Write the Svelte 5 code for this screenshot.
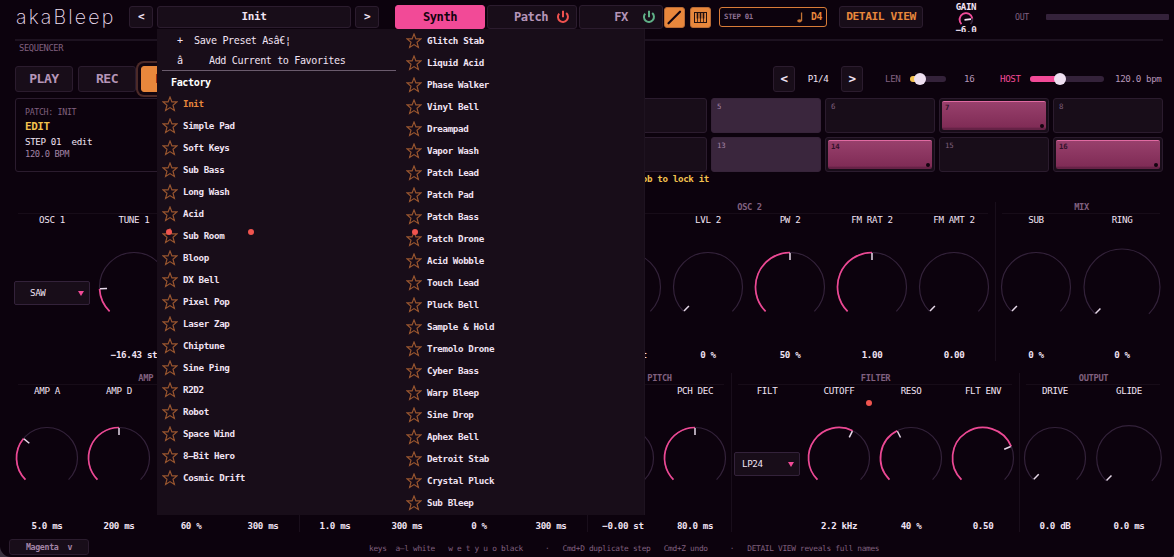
<script>
  const factory = [
    'Init', 'Simple Pad', 'Soft Keys', 'Sub Bass', 'Long Wash', 'Acid', 'Sub Room', 'Bloop', 'DX Bell',
    'Pixel Pop', 'Laser Zap', 'Chiptune', 'Sine Ping', 'R2D2', 'Robot', 'Space Wind', '8–Bit Hero', 'Cosmic Drift'
  ];
  const more = [
    'Glitch Stab', 'Liquid Acid', 'Phase Walker', 'Vinyl Bell', 'Dreampad', 'Vapor Wash', 'Patch Lead',
    'Patch Pad', 'Patch Bass', 'Patch Drone', 'Acid Wobble', 'Touch Lead', 'Pluck Bell', 'Sample & Hold',
    'Tremolo Drone', 'Cyber Bass', 'Warp Bleep', 'Sine Drop', 'Aphex Bell', 'Detroit Stab', 'Crystal Pluck', 'Sub Bleep'
  ];

  const accent = [5, 13];
  const active = [7, 14, 16];
  const steps = Array.from({ length: 16 }, (_, i) => i + 1);

  // w: cell width, r: knob radius, v: position 0..1
  const osc = [
    { title: 'OSC 1', cells: [
      { name: 'OSC 1', select: 'SAW' },
      { name: 'TUNE 1', v: 0.155, text: '−16.43 st', dot: true },
      { name: '', dot: true }, { name: '' }, { name: '', dot: true }, { name: '' }
    ] },
    { title: 'OSC 2', cells: [
      { name: '' },
      { name: '', v: 0.5, text: '−0.00 st' },
      { name: 'LVL 2', v: 0, text: '0 %' },
      { name: 'PW 2', v: 0.5, text: '50 %' },
      { name: 'FM RAT 2', v: 0.5, text: '1.00' },
      { name: 'FM AMT 2', v: 0, text: '0.00' }
    ] },
    { title: 'MIX', cells: [
      { name: 'SUB', v: 0, text: '0 %' },
      { name: 'RING', v: 0, text: '0 %', w: 90, r: 38 }
    ] }
  ];
  const env = [
    { title: 'AMP ENV', cells: [
      { name: 'AMP A', v: 0.314, text: '5.0 ms' },
      { name: 'AMP D', v: 0.5, text: '200 ms' },
      { name: '', text: '60 %' },
      { name: '', text: '300 ms' }
    ] },
    { title: '', cells: [
      { name: '', text: '1.0 ms' },
      { name: '', text: '300 ms' },
      { name: '', text: '0 %' },
      { name: '', text: '300 ms' }
    ] },
    { title: 'PITCH', cells: [
      { name: '', v: 0.5, text: '−0.00 st' },
      { name: 'PCH DEC', v: 0.5, text: '80.0 ms' }
    ] },
    { title: 'FILTER', cells: [
      { name: 'FILT', select: 'LP24' },
      { name: 'CUTOFF', v: 0.598, text: '2.2 kHz', dot: true },
      { name: 'RESO', v: 0.4, text: '40 %' },
      { name: 'FLT ENV', v: 0.75, text: '0.50' }
    ] },
    { title: 'OUTPUT', cells: [
      { name: 'DRIVE', v: 0, text: '0.0 dB' },
      { name: 'GLIDE', v: 0, text: '0.0 ms', w: 76, r: 32.3 }
    ] }
  ];
  const rows = [
    { w: 82, r: 34.5, groups: osc },
    { w: 72, r: 30.5, groups: env }
  ];

  const footer = 'keys  a–l white   w e t y u o black     ·   Cmd+D duplicate step   Cmd+Z undo     ·   DETAIL VIEW reveals full names';

  function point(r, v) {
    const a = ((v * 270 - 135) * Math.PI) / 180;
    return [r * Math.sin(a), -r * Math.cos(a)];
  }

  function arc(r, from, to) {
    const [x1, y1] = point(r, from);
    const [x2, y2] = point(r, to);
    return `M${x1} ${y1}A${r} ${r} 0 ${(to - from) * 270 > 180 ? 1 : 0} 1 ${x2} ${y2}`;
  }
</script>

{#snippet knob(r, v)}
  {@const p = point(r - 0.5, v)}
  {@const q = point(r - 7.5, v)}
  <svg class="knob" width="84" height="84" viewBox="-42 -42 84 84">
    <path class="track" d={arc(r, 0, 1)} />
    {#if v > 0}<path class="fill" d={arc(r, 0, v)} />{/if}
    <line x1={p[0]} y1={p[1]} x2={q[0]} y2={q[1]} />
  </svg>
{/snippet}

{#snippet power(color)}
  <svg class="power" width="14" height="14" viewBox="0 0 14 14" stroke={color}>
    <path d="M3.2 3.6A5 5 0 1 0 10.2 3.1M7 0.8V7.2" />
  </svg>
{/snippet}

{#snippet preset(name, on)}
  <li class:on>
    <svg width="16" height="16" viewBox="-8 -8 16 16">
      <path d="M0 -7L1.9 -2.1L7 -2.1L3 1.2L4.4 6.5L0 3.6L-4.4 6.5L-3 1.2L-7 -2.1L-1.9 -2.1Z" />
    </svg>
    {name}
  </li>
{/snippet}

<div class="window">
  <header>
    <h1>akaBleep</h1>
    <button class="nav">&lt;</button>
    <button class="current">Init</button>
    <button class="nav">&gt;</button>
    <nav>
      <button class="tab selected">Synth</button>
      <button class="tab">Patch {@render power('#f0524f')}</button>
      <button class="tab fx">FX {@render power('#5fb087')}</button>
    </nav>
    <button class="tool">
      <svg width="21" height="21" viewBox="0 0 21 21"><path d="M4.5 16.3L16 4.7" stroke="#12040f" stroke-width="2.2" stroke-linecap="round" /></svg>
    </button>
    <button class="tool keys">
      <svg width="21" height="21" viewBox="0 0 21 21" fill="none" stroke="#24100f">
        <rect x="4.5" y="5.5" width="12" height="10" />
        <path d="M7.5 6V15M10.5 6V15M13.5 6V15" stroke-width=".8" />
        <path d="M7.5 6V11.5M10.5 6V11.5M13.5 6V11.5" stroke-width="1.6" />
      </svg>
    </button>
    <div class="step-box">
      <span>STEP 01</span>
      <svg width="7" height="11" viewBox="0 0 7 11"><ellipse cx="2.5" cy="8.8" rx="2.3" ry="1.6" /><path d="M3.9 0.5H5.2V9H3.9Z" /></svg>
      <b>D4</b>
    </div>
    <button class="detail">DETAIL VIEW</button>
    <div class="gain">
      <span>GAIN</span>
      <svg width="18" height="14" viewBox="-9 -7.5 18 14">
        <path d={arc(6.4, 0, 1)} stroke="#3a263d" />
        <path d={arc(6.4, 0, 0.8)} stroke="#f24a97" />
        <path d="M-1.5 .3L5 -.3" stroke="#f4e4f4" />
      </svg>
      <b>−6.0</b>
    </div>
    <span class="out">OUT</span>
    <div class="meter"></div>
  </header>

  <main>
    <div class="title">SEQUENCER</div>
    <div class="transport">
      <button class="big">PLAY</button>
      <button class="big">REC</button>
      <button class="big edit">EDIT</button>
      <button class="page first">&lt;</button>
      <span class="page-no">P1/4</span>
      <button class="page">&gt;</button>
      <span class="len">LEN</span>
      <div class="slider len-slider"><i style:width="10px"></i></div>
      <span class="num">16</span>
      <span class="host">HOST</span>
      <div class="slider host-slider"><i style:width="30px"></i></div>
      <span class="bpm">120.0 bpm</span>
    </div>

    <div class="sequencer">
      <div class="info">
        <span class="patch">PATCH: INIT</span>
        <b>EDIT</b>
        <span class="step">STEP 01  edit</span>
        <span class="tempo">120.0 BPM</span>
      </div>
      <div class="steps">
        {#each steps as n}
          <div class="cell" class:accent={accent.includes(n)} class:active={active.includes(n)}>
            {#if active.includes(n)}
              <div class="note"><span>{n}</span><i></i></div>
            {:else}
              <span>{n}</span>
            {/if}
          </div>
        {/each}
      </div>
    </div>
    <div class="hint">turn knob to lock it</div>

    {#each rows as row}
      <section>
        {#each row.groups as group}
          <div class="group">
            <h2>{group.title}</h2>
            <div class="params">
              {#each group.cells as c}
                <div class="param" style:width="{c.w ?? row.w}px">
                  <span class="name">{c.name}</span>
                  <div class="control">
                    {#if c.select}
                      <div class="select" class:narrow={row.w < 80}>{c.select}<i></i></div>
                    {:else if c.v !== undefined}
                      {@render knob(c.r ?? row.r, c.v)}
                    {/if}
                    {#if c.dot}<i class="dot" class:near={row.w < 80}></i>{/if}
                  </div>
                  <b>{c.text ?? ''}</b>
                </div>
              {/each}
            </div>
          </div>
        {/each}
      </section>
    {/each}
  </main>

  <footer>
    <button class="theme"><span>Magenta</span><span>v</span></button>
    <span class="help">{footer}</span>
  </footer>

  <div class="menu">
    <div class="column">
      <div class="action"><span>+</span>Save Preset Asâ€¦</div>
      <div class="action fav"><span>â</span>Add Current to Favorites</div>
      <hr />
      <h3>Factory</h3>
      <ul>
        {#each factory as name, i}{@render preset(name, i === 0)}{/each}
      </ul>
    </div>
    <ul class="column second">
      {#each more as name}{@render preset(name, false)}{/each}
    </ul>
  </div>
</div>

<style>
  :global(body) {
    margin: 0;
    background: #3b3340;
  }
  * {
    box-sizing: border-box;
    letter-spacing: -0.039em;
  }
  .window {
    position: relative;
    width: 1174px;
    height: 557px;
    overflow: hidden;
    background: #0c020d;
    color: #f1e3f3;
    border-radius: 0 0 4px 11px;
    font: 9.19px/14px "DejaVu Sans Mono", monospace;
  }
  h1, h2, h3, ul, hr {
    margin: 0;
    padding: 0;
    border: 0;
    list-style: none;
  }
  button {
    display: flex;
    align-items: center;
    justify-content: center;
    flex: none;
    padding: 0;
    border: 1px solid #2b1c2e;
    border-radius: 3px;
    background: #180d19;
    color: #f1e3f3;
    font: bold 11px/14px "DejaVu Sans Mono", monospace;
  }

  /* top bar */
  header {
    display: flex;
    align-items: center;
    height: 41px;
    margin: 0 5px 0 15px;
    padding-bottom: 7px;
    background: linear-gradient(#1d1220, #1d1220) 0 39px / 1148px 2px no-repeat;
  }
  h1 {
    width: 114px;
    padding-left: 1px;
    color: #eedff0;
    font: 200 19.6px/24px Inter, sans-serif;
    letter-spacing: 2.15px;
    white-space: nowrap;
  }
  .nav {
    width: 24px;
    height: 22px;
  }
  .current {
    width: 194px;
    height: 22px;
    margin: 0 4px;
  }
  nav {
    display: flex;
    gap: 2px;
    margin-left: 16px;
  }
  .tab {
    width: 90px;
    height: 24px;
    color: #b595b8;
    font-size: 12.1px;
    gap: 8px;
    padding-left: 20px;
  }
  .tab.selected {
    padding: 0;
    border-color: #f24a97;
    background: #f24a97;
    color: #12040f;
  }
  .tab.fx {
    width: 84px;
    padding-left: 28px;
    gap: 14px;
  }
  .power {
    flex: none;
    fill: none;
    stroke-width: 2;
  }
  .tool {
    width: 21px;
    height: 21px;
    margin-left: 1px;
    border-color: #b86a35;
    background: #e8873c;
  }
  .tool.keys {
    margin-left: 5px;
  }
  .tool svg {
    flex: none;
  }
  .step-box {
    display: flex;
    align-items: center;
    width: 108px;
    height: 20px;
    margin-left: 8px;
    padding: 0 4px;
    border: 1px solid #d87c38;
    border-radius: 3px;
    color: #8f7092;
    font-size: 7.35px;
    font-weight: bold;
  }
  .step-box span {
    flex: 1;
  }
  .step-box svg {
    fill: #c37334;
    margin-right: 7px;
  }
  .step-box b {
    color: #e8873c;
    font-size: 9.8px;
  }
  .detail {
    width: 84px;
    height: 22px;
    margin-left: 12px;
    color: #e8873c;
    font-size: 11.25px;
  }
  .gain {
    display: flex;
    flex-direction: column;
    align-items: center;
    align-self: flex-start;
    width: 40px;
    height: 32px;
    margin-left: 23px;
    overflow: hidden;
    line-height: 12px;
  }
  .gain span {
    margin-top: 1px;
    font-weight: bold;
    font-size: 9.1px;
  }
  .gain svg {
    flex: none;
    margin-top: -1px;
    fill: none;
    stroke-width: 1.8;
  }
  .gain b {
    margin-top: -2px;
  }
  .out {
    width: 31px;
    margin-left: 29px;
    color: #80607f;
    font-size: 8.27px;
  }
  .meter {
    flex: 1;
    height: 6px;
    background: #34223a;
    border-radius: 1px;
  }

  /* sequencer */
  main {
    padding-left: 11px;
  }
  .title {
    padding-left: 8px;
    color: #80607f;
    font-size: 8.73px;
  }
  .transport {
    display: flex;
    align-items: center;
    height: 26px;
    margin: 11px 11px 6px 4px;
  }
  .big {
    width: 58px;
    height: 26px;
    margin-right: 5px;
    color: #b595b8;
    font-size: 13.1px;
  }
  .big.edit {
    border-color: #e8873c;
    background: #e8873c;
    color: #12040f;
    box-shadow: 0 0 0 3px #12050f, 0 0 0 5px #4c2a28;
  }
  .page {
    width: 22px;
    height: 26px;
    font-size: 12.5px;
  }
  .page.first {
    margin-left: 569px;
  }
  .page-no {
    width: 46px;
    text-align: center;
  }
  .len {
    width: 25px;
    margin-left: 22px;
    color: #80607f;
  }
  .slider {
    height: 6px;
    border-radius: 3px;
    background: #34223a;
  }
  .slider i {
    display: block;
    position: relative;
    height: 6px;
    border-radius: 3px 0 0 3px;
    background: #f24a97;
  }
  .slider i::after {
    content: "";
    position: absolute;
    right: -6px;
    top: -3px;
    width: 12px;
    height: 12px;
    border-radius: 50%;
    background: #eedff0;
  }
  .len-slider {
    width: 36px;
  }
  .len-slider i {
    background: #f2c14e;
  }
  .host-slider {
    width: 74px;
  }
  .num {
    width: 36px;
    margin-left: 18px;
    color: #b595b8;
  }
  .host {
    width: 30px;
    color: #f24a97;
  }
  .bpm {
    margin-left: 11px;
    color: #b595b8;
  }
  .sequencer {
    display: flex;
    gap: 4px;
    height: 74px;
    margin: 0 11px 0 4px;
  }
  .info {
    display: flex;
    flex-direction: column;
    width: 236px;
    padding: 6px 9px;
    border: 1px solid #2b1c2e;
    border-radius: 3px;
    white-space: pre;
  }
  .info .patch {
    color: #80607f;
    font-size: 8.27px;
  }
  .info b {
    color: #f2c14e;
    font-size: 10.9px;
    line-height: 15px;
  }
  .info .step {
    line-height: 16px;
  }
  .info .tempo {
    color: #a384a6;
    font-size: 8.73px;
    line-height: 9px;
  }
  .steps {
    display: grid;
    flex: 1;
    grid-template-columns: repeat(8, 1fr);
    gap: 4px;
  }
  .cell {
    padding: 2px 5px;
    border: 1px solid #2b1c2e;
    border-radius: 3px;
    background: #180d19;
    color: #80607f;
    font-size: 7.35px;
    line-height: 12px;
  }
  .cell.accent {
    background: #3a263d;
    color: #a384a6;
    border-color: #37243a;
  }
  .cell.active {
    padding: 2px;
  }
  .note {
    position: relative;
    height: 29px;
    padding-left: 3px;
    border-radius: 2px;
    border-top: 1px solid #e06aa2;
    background: linear-gradient(#98406c, #802c56 90%, #652246 93%);
    color: #32102a;
    font-weight: bold;
    line-height: 11px;
  }
  .note i {
    position: absolute;
    right: 2px;
    bottom: 2px;
    width: 4px;
    height: 4px;
    border-radius: 50%;
    background: #12040f;
  }
  .hint {
    width: 698px;
    color: #f2c14e;
    font-weight: bold;
    text-align: right;
  }

  /* parameter groups */
  section {
    display: flex;
    height: 159px;
    margin-top: 16px;
  }
  section + section {
    margin-top: 12px;
  }
  .group {
    background: linear-gradient(#190e1b, #190e1b) 0 0 / 1px 100% no-repeat;
  }
  .group:first-child {
    background: none;
  }
  h2 {
    height: 12px;
    margin: 0 7px;
    padding-left: 1px;
    border-bottom: 1px solid #170c18;
    color: #80607f;
    font: bold 8.73px/10px "DejaVu Sans Mono", monospace;
    text-align: center;
  }
  .params {
    display: flex;
    margin-top: -1px;
  }
  .param {
    display: flex;
    flex-direction: column;
    align-items: center;
  }
  .name {
    height: 14px;
  }
  .control {
    display: flex;
    position: relative;
    align-items: center;
    justify-content: center;
    width: 100%;
    height: 120px;
  }
  .knob {
    flex: none;
    fill: none;
  }
  .track {
    stroke: #33223a;
    stroke-width: 1.2;
  }
  .fill {
    stroke: #ec4893;
    stroke-width: 1.7;
  }
  .knob line {
    stroke: #e6d8e8;
    stroke-width: 1.5;
  }
  .param b {
    height: 16px;
    line-height: 16px;
    white-space: nowrap;
  }
  .dot {
    position: absolute;
    left: calc(50% + 32px);
    top: 2px;
    z-index: 6;
    width: 6px;
    height: 6px;
    border-radius: 50%;
    background: #f0544f;
  }
  .dot.near {
    left: calc(50% + 27px);
  }
  .select {
    display: flex;
    align-items: center;
    justify-content: space-between;
    width: 76px;
    height: 24px;
    margin-top: 12px;
    padding: 0 5px 0 15px;
    border: 1px solid #33223a;
    border-radius: 2px;
    background: #180d19;
  }
  .select.narrow {
    width: 66px;
    padding-left: 7px;
  }
  .select i {
    border: 3px solid transparent;
    border-top: 5px solid #f24a97;
    border-bottom: 0;
  }

  footer {
    display: flex;
    align-items: center;
    height: 16px;
    margin: 7px 0 0 9px;
  }
  .theme {
    width: 80px;
    height: 16px;
    gap: 9px;
    color: #a384a6;
    font-size: 8.27px;
  }
  .help {
    margin: 4px 0 0 280px;
    color: #80607f;
    font-size: 7.82px;
    white-space: pre;
  }

  /* preset popup */
  .menu {
    position: absolute;
    left: 157px;
    top: 29px;
    z-index: 5;
    display: flex;
    width: 488px;
    height: 486px;
    border-right: 1px solid #1e1320;
    background: #180d19;
  }
  .column {
    flex: none;
    width: 244px;
    font-weight: bold;
  }
  .action {
    display: flex;
    height: 20px;
    padding-left: 20px;
    font-size: 10.11px;
    font-weight: normal;
    line-height: 24px;
  }
  .action span {
    width: 17px;
  }
  .action.fav span {
    width: 32px;
  }
  hr {
    width: 234px;
    height: 1px;
    margin: 1px 0 0 5px;
    background: #6a5b6d;
  }
  h3 {
    height: 22px;
    padding-left: 14px;
    color: #fff;
    font: bold 10.11px/24px "DejaVu Sans Mono", monospace;
  }
  li {
    display: flex;
    align-items: center;
    gap: 5px;
    height: 22px;
    padding-left: 5px;
  }
  .second {
    padding-top: 1px;
  }
  li svg {
    fill: none;
    stroke: #99562f;
    stroke-width: 1.15;
  }
  li.on {
    color: #e8873c;
  }
</style>
